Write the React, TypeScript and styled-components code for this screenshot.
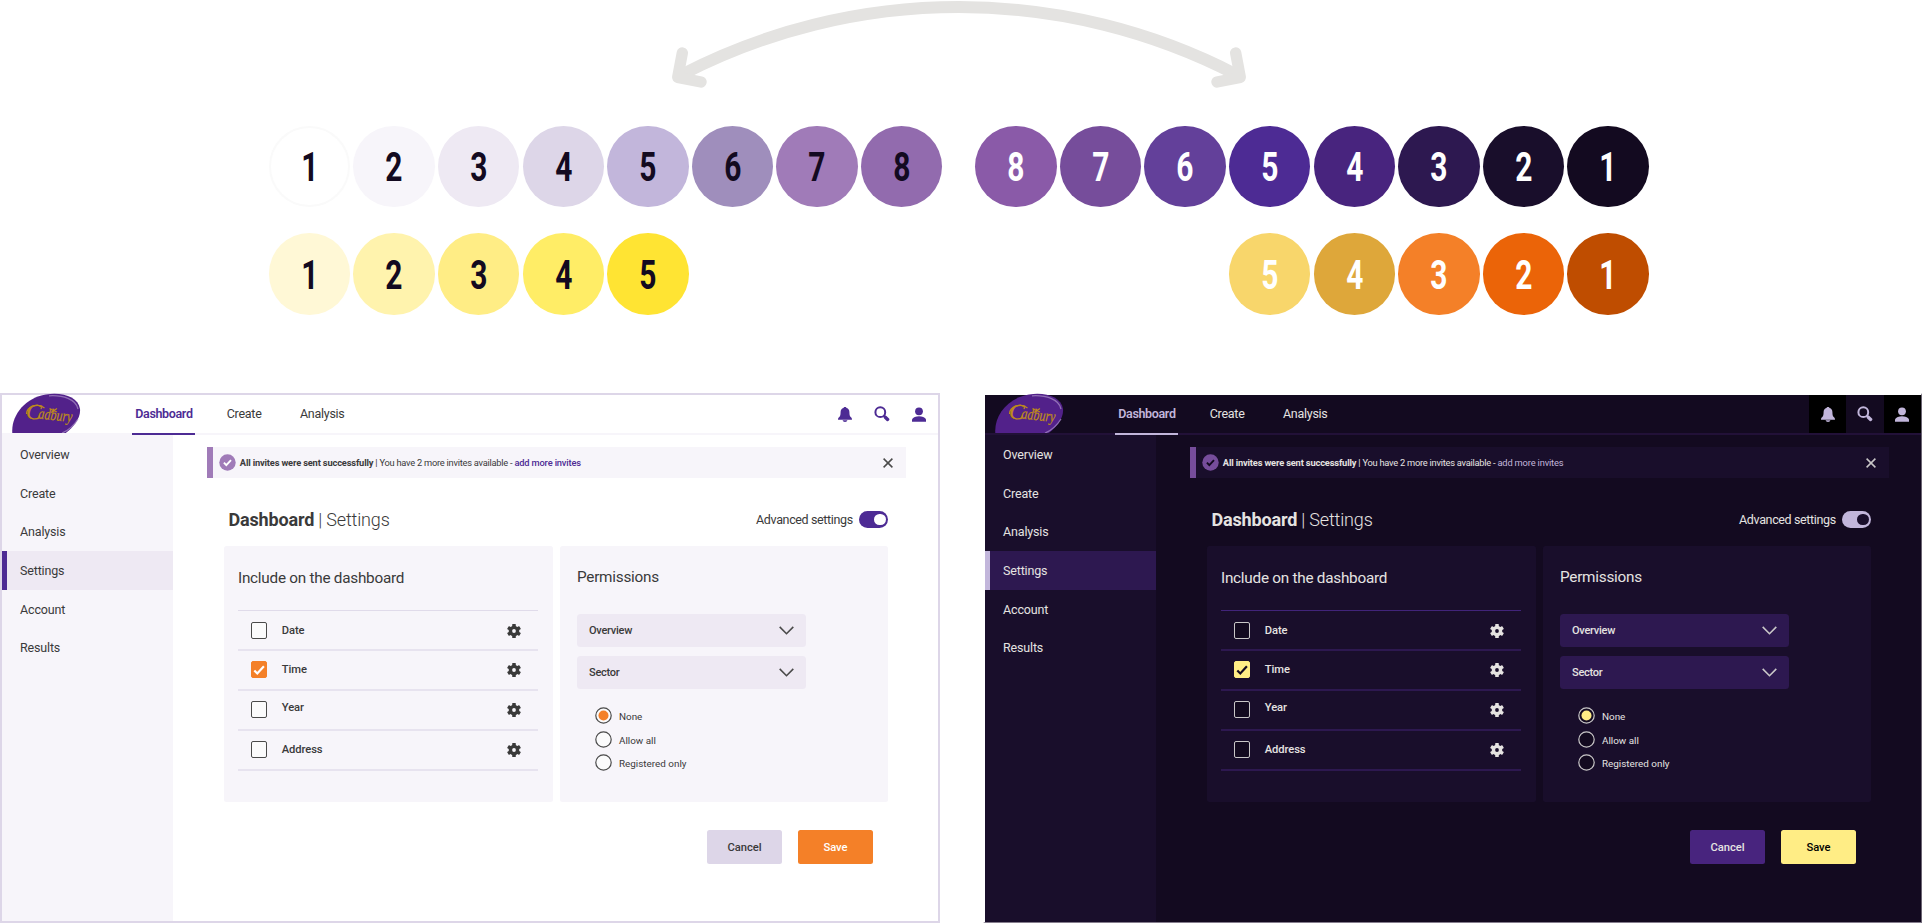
import React from "react";
import styled, { createGlobalStyle, ThemeProvider, useTheme } from "styled-components";

const GlobalStyle = createGlobalStyle`
  * { box-sizing: border-box; }
  body { margin: 0; background: #fff; font-family: Roboto, "Liberation Sans", sans-serif; overflow: hidden; }
`;

const lightTheme = {
  bg: "#ffffff", surface: "#f7f5fa", raised: "#eee9f3", line: "#e7e3ef", firstLine: "#e0dbea", headerLine: "#f7f5fa",
  text: "#3a3a3a", accent: "#4d2b94", link: "#4d2b94", linkWeight: 500, notice: "#a07bb8", tick: "#ffffff",
  boxFill: "#fbfbfc", boxLine: "#4a4a4a", check: "#f48028", checkTick: "#ffffff",
  cancel: "#ddd6e8", save: "#f48028", saveText: "#ffffff", knob: "#ffffff", iconCell: "transparent",
  border: "#ddd6e8", borderWidth: "2px", width: 940, height: 530, chevron: "#4a4a4a", activeTab: "#4d2b94",
};

const darkTheme: typeof lightTheme = {
  bg: "#130a20", surface: "#190e2b", raised: "#2d1850", line: "#2d1850", firstLine: "#41247a", headerLine: "#221138",
  text: "#e5e3e1", accent: "#c2b6db", link: "#c2b6db", linkWeight: 400, notice: "#764d9b", tick: "#130a20",
  boxFill: "#130a20", boxLine: "#c9c7c8", check: "#ffed85", checkTick: "#130a20",
  cancel: "#48247e", save: "#ffed85", saveText: "#000000", knob: "#190e2b", iconCell: "#000000",
  border: "#ffffff #6b6472 #857d8d #ffffff", borderWidth: "2px 1px 1px 2px", width: 939, height: 530,
  chevron: "#c9c7c8", activeTab: "#c2b6db",
};

type T = { theme: typeof lightTheme };

const Page = styled.main`
  width: 1922px;
  height: 924px;
  overflow: hidden;
  display: flex;
  flex-direction: column;
`;

const Palette = styled.section`
  height: 393px;
  flex: none;
`;

const Arrow = styled.svg`
  display: block;
  width: 1922px;
  height: 125.6px;
`;

const SwatchRow = styled.div`
  display: flex;
  justify-content: space-between;
  padding: 0 273.2px 0 268.8px;
  margin-bottom: 26.3px;
`;

const SwatchGroup = styled.div`
  display: flex;
  gap: 3.1px;
`;

const Swatch = styled.div<{ $color: string; $dark?: boolean; $outlined?: boolean }>`
  width: 81.5px;
  height: 81.5px;
  border-radius: 50%;
  background: ${(p) => p.$color};
  color: ${(p) => (p.$dark ? "#fff" : "#130a20")};
  border: ${(p) => (p.$outlined ? "2px solid #fafafa" : "0")};
  display: flex;
  align-items: center;
  justify-content: center;
  font-size: 41px;
  font-weight: 700;
  line-height: 1;
`;

const Digit = styled.span`
  display: block;
  padding-top: 2px;
  transform: scaleX(0.73);
`;

const Panels = styled.div`
  display: flex;
  gap: 43px;
  height: 531px;
`;

const Panel = styled.section<T>`
  width: ${(p) => p.theme.width}px;
  height: ${(p) => p.theme.height}px;
  flex: none;
  border-style: solid;
  border-width: ${(p) => p.theme.borderWidth};
  border-color: ${(p) => p.theme.border};
  background: ${(p) => p.theme.bg};
  color: ${(p) => p.theme.text};
  display: flex;
  flex-direction: column;
  white-space: nowrap;
`;

const Header = styled.header<T>`
  height: 40px;
  flex: none;
  display: flex;
  border-bottom: 2px solid ${(p) => p.theme.headerLine};
`;

const LogoSlot = styled.div`
  width: 130.3px;
  padding-left: 9px;
`;

const Nav = styled.nav`
  display: flex;
  gap: 29px;
  flex: 1;
`;

const Tab = styled.a<T & { $active?: boolean; $width: number }>`
  height: 40px;
  width: ${(p) => p.$width}px;
  padding: 0 0 1px 3px;
  display: flex;
  align-items: center;
  font-size: 12.5px;
  letter-spacing: ${(p) => (p.$active ? "-0.36px" : "-0.26px")};
  font-weight: ${(p) => (p.$active ? 600 : 400)};
  color: ${(p) => (p.$active ? p.theme.activeTab : p.theme.text)};
  border-bottom: 2px solid ${(p) => (p.$active ? p.theme.activeTab : "transparent")};
`;

const IconCell = styled.div<T & { $filled?: boolean }>`
  width: 37.4px;
  height: 38px;
  display: flex;
  align-items: center;
  justify-content: center;
  background: ${(p) => (p.$filled ? p.theme.iconCell : "transparent")};
`;

const Body = styled.div`
  flex: 1;
  display: flex;
  min-height: 0;
`;

const Sidebar = styled.aside<T>`
  width: 170.5px;
  background: ${(p) => p.theme.surface};
`;

const SideItem = styled.a<T & { $active?: boolean }>`
  height: 38.7px;
  display: flex;
  align-items: center;
  padding-left: 13px;
  font-size: 12.5px;
  letter-spacing: -0.16px;
  border-left: 5.4px solid ${(p) => (p.$active ? p.theme.accent : "transparent")};
  background: ${(p) => (p.$active ? p.theme.raised : "transparent")};
`;

const Content = styled.div`
  flex: 1;
  padding: 12px 32px 0 34.5px;
`;

const Notice = styled.div<T>`
  height: 31px;
  display: flex;
  align-items: center;
  padding: 0 13px 0 5.5px;
  background: ${(p) => p.theme.surface};
  border-left: 6px solid ${(p) => p.theme.notice};
  font-size: 9.3px;
  letter-spacing: -0.25px;
  b { letter-spacing: -0.16px; }
`;

const NoticeText = styled.p`
  flex: 1;
  margin: 0 0 0 4.3px;
`;

const Link = styled.a<T>`
  color: ${(p) => p.theme.link};
  font-weight: ${(p) => p.theme.linkWeight};
  letter-spacing: -0.16px;
`;

const TitleRow = styled.div`
  height: 67.7px;
  padding: 16px 17.7px 0 21.5px;
  display: flex;
  align-items: center;
  justify-content: space-between;
`;

const Title = styled.h1`
  margin: 0;
  font-size: 18px;
  font-weight: 300;
  letter-spacing: -0.17px;
  b { font-weight: 700; }
`;

const ToggleLabel = styled.label`
  display: flex;
  align-items: center;
  gap: 6px;
  margin-top: -1px;
  font-size: 12.5px;
  letter-spacing: -0.36px;
`;

const Toggle = styled.span<T>`
  width: 29.5px;
  height: 16.5px;
  border-radius: 9px;
  padding-right: 2.5px;
  display: flex;
  align-items: center;
  justify-content: flex-end;
  background: ${(p) => p.theme.accent};
`;

const Knob = styled.span<T>`
  width: 11.6px;
  height: 11.6px;
  border-radius: 50%;
  background: ${(p) => p.theme.knob};
`;

const Cards = styled.div`
  display: grid;
  grid-template-columns: 1fr 1fr;
  gap: 7.4px;
  padding: 0 17.7px 0 17.3px;
`;

const Card = styled.section<T & { $left: number; $right: number }>`
  height: 256.5px;
  padding: 0 ${(p) => p.$right}px 0 ${(p) => p.$left}px;
  border-radius: 2.5px;
  background: ${(p) => p.theme.surface};
`;

const CardTitle = styled.h2<{ $height: number; $top: number }>`
  margin: 0;
  height: ${(p) => p.$height}px;
  padding-top: ${(p) => p.$top}px;
  font-size: 15.3px;
  line-height: 18px;
  font-weight: 450;
  letter-spacing: -0.25px;
`;

const OptionList = styled.ul<T>`
  margin: 0;
  padding: 0;
  list-style: none;
  border-top: 1px solid ${(p) => p.theme.firstLine};
`;

const OptionRow = styled.li<T>`
  height: 40px;
  padding: 0 16.5px 0 13px;
  display: flex;
  align-items: center;
  gap: 14.3px;
  border-bottom: 2px solid ${(p) => p.theme.line};
  &:first-child { padding-top: 2px; }
`;

const CheckBox = styled.span<T & { $checked?: boolean }>`
  width: 16.5px;
  height: 16.5px;
  border-radius: 2px;
  border: 1.2px solid ${(p) => (p.$checked ? p.theme.check : p.theme.boxLine)};
  background: ${(p) => (p.$checked ? p.theme.check : p.theme.boxFill)};
  display: flex;
  align-items: center;
  justify-content: center;
`;

const OptionLabel = styled.span<{ $shift: number }>`
  flex: 1;
  font-size: 11.2px;
  font-weight: 500;
  letter-spacing: -0.1px;
  padding-bottom: ${(p) => p.$shift}px;
`;

const Select = styled.div<T>`
  width: 228.7px;
  height: 33px;
  margin-bottom: 9.6px;
  padding: 0 12px;
  display: flex;
  align-items: center;
  justify-content: space-between;
  border-radius: 3.5px;
  background: ${(p) => p.theme.raised};
  font-size: 11px;
  font-weight: 500;
  letter-spacing: -0.25px;
`;

const Radios = styled.div`
  padding: 5.2px 0 0 17.7px;
`;

const RadioRow = styled.label`
  height: 23.3px;
  display: flex;
  align-items: center;
  gap: 7.3px;
  font-size: 9.9px;
  font-weight: 450;
`;

const RadioText = styled.span`
  padding-top: 2px;
`;

const Actions = styled.div`
  display: flex;
  justify-content: flex-end;
  gap: 16px;
  padding: 27.6px 33px 0 0;
`;

const Button = styled.button<{ $bg: string; $color?: string }>`
  width: 75px;
  height: 34.5px;
  padding: 0;
  border: 0;
  border-radius: 2.5px;
  background: ${(p) => p.$bg};
  color: ${(p) => p.$color ?? "inherit"};
  font: 500 11.2px Roboto, "Liberation Sans", sans-serif;
`;

const LogoDrawing = styled.svg`
  display: block;
  overflow: visible;
`;

const Logo = () => (
  <LogoDrawing width="72" height="40" viewBox="0 0 72 40">
    <clipPath id="logo-clip"><rect x="-2" y="-2" width="80" height="40" /></clipPath>
    <g clipPath="url(#logo-clip)">
      <path d="M1.500 40 C-1 22 13 3 35 -.5 C52 -3 67 2 69 14 C70 24 61 34 52 40 Z" fill="#52218a" />
      <path d="M38 .8 C52 0 65 4 67 14 M67 24 C62 32 56 36 51 38" fill="none" stroke="#a58ac4" strokeWidth="1.3" opacity=".75" />
      <g transform="rotate(6 36 20)" fill="#bd8a1c" stroke="#bd8a1c" strokeWidth=".3" fontFamily="'Liberation Serif', serif" fontStyle="italic">
        <text x="15" y="25.500" fontSize="22" textLength="15" lengthAdjust="spacingAndGlyphs">C</text>
        <text x="27.500" y="24.500" fontSize="16" textLength="34" lengthAdjust="spacingAndGlyphs">adbury</text>
      </g>
      <path d="M39 14l7 3M46 13.500l-6 4M15.500 19c0-8 12-11 18-6" fill="none" stroke="#bd8a1c" strokeWidth="1.200" />
    </g>
  </LogoDrawing>
);

const BellIcon = ({ color }: { color: string }) => (
  <svg width="14" height="15" viewBox="0 0 14 15" fill={color}>
    <path d="M7 0C5.9 0 5.5.7 5.4 1.1 3.5 1.6 2.7 3 2.6 4.9 2.5 7.900 2.300 8.900 1.300 10 .5 10.800 0 11.200 0 12.700H14C14 11.200 13.500 10.800 12.700 10 11.700 8.900 11.500 7.900 11.400 4.900 11.300 3 10.500 1.600 8.600 1.100 8.500.7 8.100 0 7 0Z" />
    <path d="M4.600 13.300H9.400C9.100 14.400 8.200 15 7 15S4.900 14.400 4.600 13.300Z" />
  </svg>
);

const SearchIcon = ({ color }: { color: string }) => (
  <svg width="16" height="16" viewBox="0 0 16 16" fill="none" stroke={color}>
    <circle cx="6.300" cy="6.200" r="4.900" strokeWidth="2" />
    <path d="M9.700 9.600l1.600 1.500" strokeWidth="2" />
    <path d="M11.300 11.200l2.300 2.200" strokeWidth="3.400" strokeLinecap="round" />
  </svg>
);

const UserIcon = ({ color }: { color: string }) => (
  <svg width="14" height="15" viewBox="0 0 14 15" fill={color}>
    <circle cx="7" cy="4.300" r="3.900" />
    <path d="M0 14.700V12.300C1 10.200 4 9.300 7 9.300S13 10.200 14 12.300V14.700Z" />
  </svg>
);

const TickIcon = ({ color, size }: { color: string; size: number }) => (
  <svg width={size} height={size} viewBox="0 0 12 12" fill="none" stroke={color} strokeWidth="2.200">
    <path d="M1.300 6.500l3 3L10.900 2.300" />
  </svg>
);

const NoticeIcon = ({ fill, tick }: { fill: string; tick: string }) => (
  <svg width="17" height="17" viewBox="0 0 17 17">
    <circle cx="8.500" cy="8.500" r="8.200" fill={fill} />
    <path d="M4.900 8.700l2.400 2.500 4.700-5" fill="none" stroke={tick} strokeWidth="1.900" />
  </svg>
);

const CloseIcon = ({ color }: { color: string }) => (
  <svg width="10" height="10" viewBox="0 0 10 10" stroke={color} strokeWidth="1.500">
    <path d="M.6.6l8.800 8.800M9.400.6L.6 9.400" />
  </svg>
);

const ChevronIcon = ({ color }: { color: string }) => (
  <svg width="15" height="9" viewBox="0 0 15 9" fill="none" stroke={color} strokeWidth="1.600">
    <path d="M.7.900l6.800 6.800L14.300.9" />
  </svg>
);

const HubDot = styled.circle<T>`
  fill: ${(p) => p.theme.surface};
`;

const GearIcon = ({ color }: { color: string }) => (
  <svg width="14" height="14" viewBox="0 0 14 14">
    <g fill={color}>
      {[0, 60, 120].map((a) => (
        <rect key={a} x="5.200" y="0" width="3.600" height="14" rx=".6" transform={`rotate(${a} 7 7)`} />
      ))}
    </g>
    <circle cx="7" cy="7" r="3.600" fill="none" stroke={color} strokeWidth="3.400" />
    <HubDot cx="7" cy="7" r="1.900" />
  </svg>
);

const RadioIcon = ({ on }: { on?: boolean }) => {
  const t = useTheme() as typeof lightTheme;
  return (
    <svg width="17" height="17" viewBox="0 0 17 17">
      <circle cx="8.500" cy="8.500" r="7.700" fill={t.boxFill} stroke={t.boxLine} strokeWidth="1.200" />
      {on && <circle cx="8.500" cy="8.500" r="5" fill={t.check} />}
    </svg>
  );
};

const options = [
  { name: "Date", shift: 0 },
  { name: "Time", shift: 0, checked: true },
  { name: "Year", shift: 4 },
  { name: "Address", shift: 0 },
];

const Dashboard = () => {
  const t = useTheme() as typeof lightTheme;
  return (
    <Panel>
      <Header>
        <LogoSlot><Logo /></LogoSlot>
        <Nav>
          <Tab $active $width={62.4}>Dashboard</Tab>
          <Tab $width={44.2}>Create</Tab>
          <Tab $width={60}>Analysis</Tab>
        </Nav>
        <IconCell $filled><BellIcon color={t.accent} /></IconCell>
        <IconCell><SearchIcon color={t.accent} /></IconCell>
        <IconCell $filled><UserIcon color={t.accent} /></IconCell>
      </Header>
      <Body>
        <Sidebar>
          {["Overview", "Create", "Analysis", "Settings", "Account", "Results"].map((s) => (
            <SideItem key={s} $active={s === "Settings"}>{s}</SideItem>
          ))}
        </Sidebar>
        <Content>
          <Notice>
            <NoticeIcon fill={t.notice} tick={t.tick} />
            <NoticeText>
              <b>All invites were sent successfully</b> | You have 2 more invites available - <Link>add more invites</Link>
            </NoticeText>
            <CloseIcon color={t.chevron} />
          </Notice>
          <TitleRow>
            <Title><b>Dashboard</b> | Settings</Title>
            <ToggleLabel>Advanced settings<Toggle><Knob /></Toggle></ToggleLabel>
          </TitleRow>
          <Cards>
            <Card $left={13.7} $right={15}>
              <CardTitle $height={64} $top={23}>Include on the dashboard</CardTitle>
              <OptionList>
                {options.map((o) => (
                  <OptionRow key={o.name}>
                    <CheckBox $checked={o.checked}>{o.checked && <TickIcon color={t.checkTick} size={12} />}</CheckBox>
                    <OptionLabel $shift={o.shift}>{o.name}</OptionLabel>
                    <GearIcon color={t.text} />
                  </OptionRow>
                ))}
              </OptionList>
            </Card>
            <Card $left={17} $right={0}>
              <CardTitle $height={68} $top={22}>Permissions</CardTitle>
              <Select>Overview<ChevronIcon color={t.chevron} /></Select>
              <Select>Sector<ChevronIcon color={t.chevron} /></Select>
              <Radios>
                <RadioRow><RadioIcon on /><RadioText>None</RadioText></RadioRow>
                <RadioRow><RadioIcon /><RadioText>Allow all</RadioText></RadioRow>
                <RadioRow><RadioIcon /><RadioText>Registered only</RadioText></RadioRow>
              </Radios>
            </Card>
          </Cards>
          <Actions>
            <Button $bg={t.cancel}>Cancel</Button>
            <Button $bg={t.save} $color={t.saveText}>Save</Button>
          </Actions>
        </Content>
      </Body>
    </Panel>
  );
};

const lightPurples = ["#ffffff", "#f7f5fa", "#eee9f3", "#ddd6e8", "#c2b6db", "#9f8ebc", "#a07bb8", "#926bae"];
const darkPurples = ["#8a5aa8", "#764d9b", "#63409a", "#4d2b94", "#48247e", "#2d1850", "#190e2b", "#130a20"];
const yellows = ["#fff8d6", "#fff3ad", "#ffed85", "#ffed66", "#ffe433"];
const oranges = ["#f8d66b", "#dea73a", "#f48028", "#eb6408", "#bf4d00"];

const Swatches = ({ colors, dark }: { colors: string[]; dark?: boolean }) => (
  <SwatchGroup>
    {colors.map((c, i) => (
      <Swatch key={c} $color={c} $dark={dark} $outlined={c === "#ffffff"}>
        <Digit>{dark ? colors.length - i : i + 1}</Digit>
      </Swatch>
    ))}
  </SwatchGroup>
);

export default function App() {
  return (
    <Page>
      <GlobalStyle />
      <Palette>
        <Arrow viewBox="0 0 1922 125.6" fill="none" stroke="#e4e3e1" strokeLinecap="round" strokeLinejoin="round">
          <path d="M682 74.500A603 603 0 0 1 1236 74.500" strokeWidth="12" />
          <path d="M682.300 53L677.700 77.300L701 82" strokeWidth="11.400" />
          <path d="M1235.700 53L1240.300 77.300L1217 82" strokeWidth="11.400" />
        </Arrow>
        <SwatchRow>
          <Swatches colors={lightPurples} />
          <Swatches colors={darkPurples} dark />
        </SwatchRow>
        <SwatchRow>
          <Swatches colors={yellows} />
          <Swatches colors={oranges} dark />
        </SwatchRow>
      </Palette>
      <Panels>
        <ThemeProvider theme={lightTheme}><Dashboard /></ThemeProvider>
        <ThemeProvider theme={darkTheme}><Dashboard /></ThemeProvider>
      </Panels>
    </Page>
  );
}
